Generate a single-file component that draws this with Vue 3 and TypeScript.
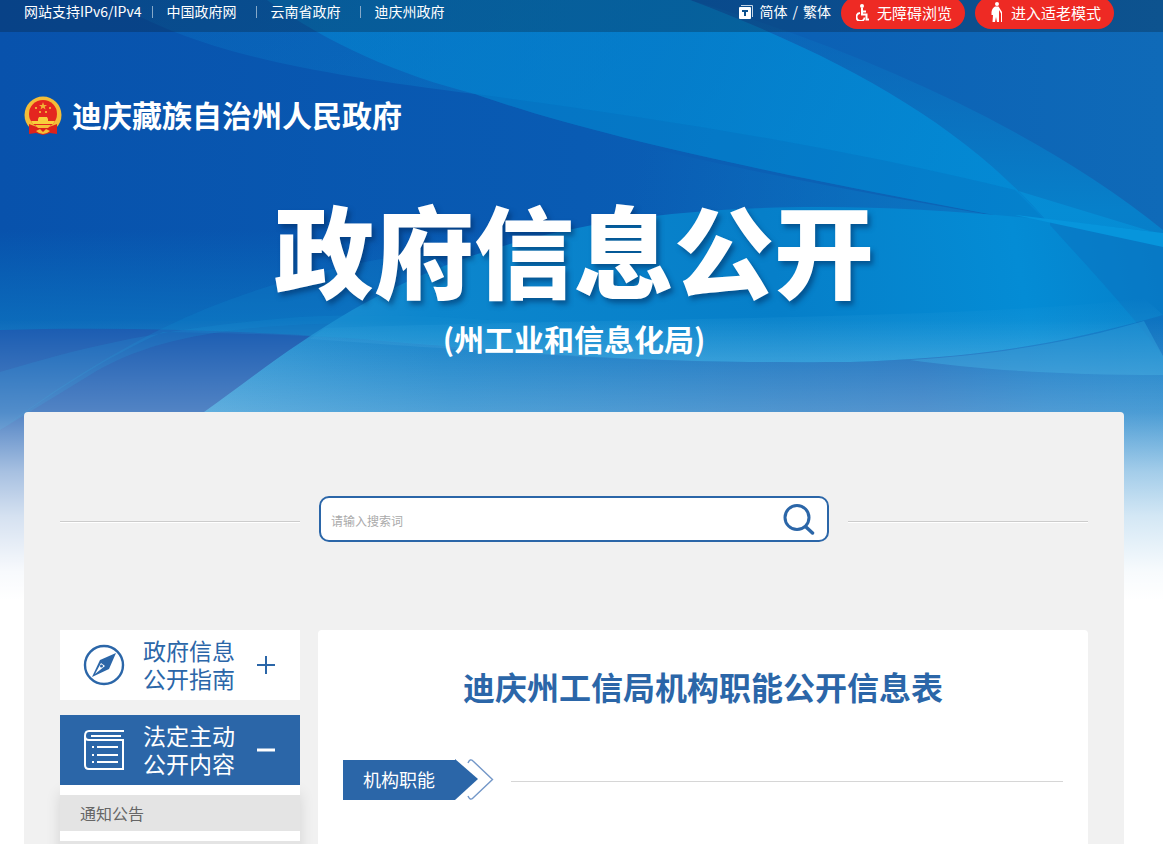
<script setup lang="ts">
import { ref } from 'vue'

const keyword = ref('')
const portals: string[] = ['中国政府网', '云南省政府', '迪庆州政府']
const notices: string[] = ['通知公告', '']
</script>

<template>
  <div class="page">
    <svg class="backdrop" viewBox="0 0 1163 620" preserveAspectRatio="none" aria-hidden="true">
      <defs>
        <linearGradient id="base" x1="0" y1="0" x2="1" y2="0">
          <stop offset="0" stop-color="#0852ac" />
          <stop offset="0.5" stop-color="#095bb3" />
          <stop offset="1" stop-color="#0f6ab8" />
        </linearGradient>
        <linearGradient id="upper" x1="0" y1="0" x2="1" y2="0.3">
          <stop offset="0" stop-color="#0a84cf" stop-opacity="0.2" />
          <stop offset="0.5" stop-color="#0a8ad4" stop-opacity="0.35" />
          <stop offset="1" stop-color="#049ae0" stop-opacity="0.5" />
        </linearGradient>
        <linearGradient id="ribbon" gradientUnits="userSpaceOnUse" x1="267" y1="0" x2="1050" y2="225">
          <stop offset="0" stop-color="#0487d2" stop-opacity="0.5" />
          <stop offset="0.5" stop-color="#0382ce" stop-opacity="0.75" />
          <stop offset="1" stop-color="#038cd6" stop-opacity="0.9" />
        </linearGradient>
        <linearGradient id="right" x1="0" y1="0" x2="0" y2="1">
          <stop offset="0" stop-color="#0b70be" stop-opacity="0.2" />
          <stop offset="0.5" stop-color="#0780ca" />
          <stop offset="1" stop-color="#0975c4" />
        </linearGradient>
        <linearGradient id="gap" gradientUnits="userSpaceOnUse" x1="640" y1="150" x2="1050" y2="222">
          <stop offset="0" stop-color="#0a72c0" stop-opacity="0" />
          <stop offset="1" stop-color="#0a7cc8" />
        </linearGradient>
        <linearGradient id="wave" gradientUnits="userSpaceOnUse" x1="204" y1="412" x2="1163" y2="240">
          <stop offset="0" stop-color="#2a93d3" />
          <stop offset="0.25" stop-color="#0c86cd" />
          <stop offset="0.6" stop-color="#067fc9" />
          <stop offset="0.85" stop-color="#048cd5" />
          <stop offset="1" stop-color="#0580ca" />
        </linearGradient>
        <linearGradient id="lift" x1="0" y1="0" x2="0" y2="1">
          <stop offset="0" stop-color="#0a78c4" stop-opacity="0" />
          <stop offset="1" stop-color="#0f78c2" stop-opacity="0.85" />
        </linearGradient>
        <linearGradient id="shade">
          <stop offset="0" stop-color="#1d66b7" stop-opacity="0" />
          <stop offset="0.4" stop-color="#1d66b7" stop-opacity="0.35" />
          <stop offset="0.75" stop-color="#1d66b7" stop-opacity="0.75" />
          <stop offset="1" stop-color="#1d66b7" stop-opacity="0.3" />
        </linearGradient>
        <linearGradient id="glow" x1="0" y1="0" x2="0" y2="1">
          <stop offset="0" stop-color="#2a9ddb" stop-opacity="0" />
          <stop offset="1" stop-color="#2a9ddb" stop-opacity="0.6" />
        </linearGradient>
        <linearGradient id="fade" x1="0" y1="0" x2="0" y2="1">
          <stop offset="0" stop-color="#fff" stop-opacity="0" />
          <stop offset="0.33" stop-color="#fff" stop-opacity="0.26" />
          <stop offset="0.4" stop-color="#fff" stop-opacity="0.38" />
          <stop offset="0.54" stop-color="#fff" stop-opacity="0.62" />
          <stop offset="0.7" stop-color="#fff" stop-opacity="0.82" />
          <stop offset="0.9" stop-color="#fff" stop-opacity="0.97" />
          <stop offset="1" stop-color="#fff" />
        </linearGradient>
      </defs>
      <rect width="1163" height="620" fill="url(#base)" />
      <rect y="230" width="1163" height="120" fill="url(#lift)" />
      <path d="M690 0C860 50 1040 130 1163 230V420L1050 225C970 130 850 60 690 0Z" fill="url(#right)" />
      <path d="M593 134C742 172 900 200 1050 225V240H593Z" fill="url(#gap)" />
      <path d="M111 0C190 50 300 72 475 94C650 117 830 145 1015 190L1163 235V247L1050 225C970 130 850 60 690 0Z" fill="url(#upper)" />
      <path d="M267 0C330 45 400 75 475 94C600 138 800 180 1050 225C970 130 850 60 690 0Z" fill="url(#ribbon)" />
      <path d="M475 94C600 138 800 180 1050 225L1015 190C830 145 650 117 475 94Z" fill="#0576c4" opacity=".35" />
      <path d="M0 330C180 325 350 336 519 352V620H0Z" fill="#1659b0" />
      <path d="M0 430C60 385 110 355 163 328C240 290 340 262 430 252L519 330C300 315 170 325 90 375Z" fill="#0f86cc" opacity=".28" />
      <path d="M204 412C330 322 450 207 820 207C940 207 1060 220 1163 233V620H0Z" fill="url(#wave)" />
      <path d="M1050 225C1095 275 1130 312 1163 356V233L1050 222Z" fill="#0a72c0" opacity=".5" />
      <path d="M1015 215L1163 233V247Z" fill="#0795dc" />
      <path d="M325 328C600 318 980 320 1144 298L1163 315C1040 350 960 358 850 362C690 363 600 360 310 339Z" fill="url(#glow)" />
      <path d="M310 336L350 338C600 360 690 363 850 362C960 358 1040 350 1163 315V620H204V412Z" fill="url(#shade)" />
      <path d="M0 372C90 345 163 328 300 317C430 310 560 325 668 340L519 352C400 340 300 334 163 332C100 360 50 395 0 430Z" fill="#168dd1" opacity=".24" />
      <path d="M910 360C1000 355 1080 340 1144 321L1163 356V375C1060 375 980 370 910 360Z" fill="#229ad8" opacity=".55" />
      <rect y="320" width="1163" height="280" fill="url(#fade)" />
      <rect y="600" width="1163" height="20" fill="#fff" />
    </svg>

    <div class="topbar">
      <div class="topbar-inner">
        <nav class="portals">
          <span>网站支持IPv6/IPv4</span>
          <a v-for="name in portals" :key="name" href="#">{{ name }}</a>
        </nav>
        <div class="tools">
          <span class="script">
            <svg width="14" height="14" viewBox="0 0 14 14" aria-hidden="true">
              <path d="M2 .5H13.5V12" fill="none" stroke="#c6d6e6" />
              <rect y="2" width="12" height="12" rx="1" fill="#fff" />
              <path d="M3 5H9V7H7V11H5V7H3Z" fill="#0b508d" />
            </svg>
            <a href="#">简体</a> / <a href="#">繁体</a>
          </span>
          <button class="pill" type="button">
            <svg width="14" height="18" viewBox="0 0 14 18" fill="none" stroke="#fff" aria-hidden="true">
              <circle cx="6" cy="3" r="2" fill="#fff" stroke="none" />
              <path d="M6 5V11.500H10.500V16.500H13M6 8.500H10" stroke-width="2" />
              <path d="M4 10A4 4 0 1 0 8.500 14.500" stroke-width="1.800" />
            </svg>
            无障碍浏览
          </button>
          <button class="pill" type="button">
            <svg width="14" height="20" viewBox="0 0 14 20" fill="#fff" aria-hidden="true">
              <circle cx="7" cy="2" r="2" />
              <path d="M5 4.500Q2 6 1.500 10V13H3L2.500 20H5L6 15L7 20H9V8L11 11.500L12 10L8.500 4.500Z" />
              <path d="M11.500 10V20" fill="none" stroke="#fff" />
            </svg>
            进入适老模式
          </button>
        </div>
      </div>
    </div>

    <header class="banner">
      <a class="brand" href="#">
        <svg width="38" height="40" viewBox="0 0 38 40" aria-hidden="true">
          <ellipse cx="19" cy="19" rx="18.500" ry="18.500" fill="#f4bd38" />
          <circle cx="19" cy="18" r="14" fill="#e4261f" />
          <path d="M19 6L20 9H23L20.700 10.800L21.500 13.500L19 11.800L16.500 13.500L17.300 10.800L15 9H18Z" fill="#f3b236" />
          <path d="M11 11H13V13H11ZM25 11H27V13H25ZM15 15H17V17H15ZM21 15H23V17H21Z" fill="#f0a634" />
          <path d="M14 23L15 21H23L24 23V25H31L29 28H9L7 25H14Z" fill="#f8cf3c" />
          <path d="M5 28L13 31H25L33 28V38L26 37L19 39L12 37L5 38Z" fill="#dc221c" />
          <path d="M11 29H27L24 32H14ZM12 35L16 33L19 36L22 33L26 35L23 37L19 38L15 37Z" fill="#f5c037" />
        </svg>
        <span>迪庆藏族自治州人民政府</span>
      </a>
      <h1>政府信息公开</h1>
      <p class="bureau">(州工业和信息化局)</p>
    </header>

    <main class="sheet">
      <form class="search-row" @submit.prevent>
        <i class="rule"></i>
        <div class="search">
          <input v-model="keyword" type="text" aria-label="搜索词" placeholder="请输入搜索词" />
          <button type="submit" aria-label="搜索">
            <svg width="32" height="32" viewBox="0 0 32 32" fill="none" stroke="#2b66a8" aria-hidden="true">
              <circle cx="14" cy="14.500" r="12" stroke-width="3" />
              <path d="M23 24L29.500 30" stroke-width="3.500" stroke-linecap="round" />
            </svg>
          </button>
        </div>
        <i class="rule"></i>
      </form>

      <div class="columns">
        <aside>
          <button class="group" type="button" aria-expanded="false">
            <svg width="42" height="42" viewBox="0 0 42 42" aria-hidden="true">
              <circle cx="21" cy="21" r="19" fill="none" stroke="#2b66a8" stroke-width="2.400" />
              <path d="M33 9L26 25L9 33L17 16Z" fill="#2b66a8" />
              <path d="M18 19L22 22L12 30Z" fill="#fff" />
              <circle cx="18.500" cy="22" r="1.500" fill="#2b66a8" />
            </svg>
            <span>政府信息<br />公开指南</span>
            <svg class="sign" width="18" height="18" viewBox="0 0 18 18" stroke="#2b66a8" stroke-width="2" aria-hidden="true">
              <path d="M0 9H18M9 0V18" />
            </svg>
          </button>
          <button class="group open" type="button" aria-expanded="true">
            <svg width="42" height="42" viewBox="0 0 42 42" fill="none" stroke="#fff" stroke-width="2" aria-hidden="true">
              <path d="M41 2H6Q2 2 2 7V36Q2 40 6 40H40V11H6Q2 11 2 7" />
              <path d="M8 7H38" stroke-width="2" />
              <path d="M14 18H35M14 26H35M14 33H35M9 18H11M9 26H11M9 33H11" />
            </svg>
            <span>法定主动<br />公开内容</span>
            <svg class="sign" width="18" height="18" viewBox="0 0 18 18" stroke="#fff" stroke-width="3" aria-hidden="true">
              <path d="M0 9H18" />
            </svg>
          </button>
          <ul class="notices">
            <li v-for="item in notices" :key="item"><a v-if="item" href="#">{{ item }}</a></li>
          </ul>
        </aside>

        <article>
          <h2>迪庆州工信局机构职能公开信息表</h2>
          <div class="section">
            <h3>机构职能</h3>
            <svg width="40" height="42" viewBox="0 0 40 42" aria-hidden="true">
              <path d="M0 0L23 20L0 41Z" fill="#2b66a8" />
              <path d="M13 4Q15 -1 18 2L37.500 20.500L18 39Q15 42 13 37" fill="none" stroke="#7397c8" stroke-width="1.400" />
            </svg>
            <i class="rule"></i>
          </div>
        </article>
      </div>
    </main>
  </div>
</template>

<style>
body {
  overflow: hidden;
}
</style>

<style scoped>
.page {
  position: relative;
  height: 100vh;
  overflow: hidden;
  background: #fff;
  font-family: "Noto Sans CJK SC", sans-serif;
}
.page * {
  box-sizing: border-box;
}
a {
  color: inherit;
  text-decoration: none;
}
button {
  border: 0;
  font-family: inherit;
  cursor: pointer;
}
svg {
  display: block;
  flex: none;
}
.backdrop {
  position: absolute;
  top: 0;
  left: 0;
  width: 100%;
  height: 620px;
}
.topbar {
  position: relative;
  height: 32px;
  padding: 0 24px;
  background: rgba(10, 30, 50, 0.3);
  color: #fff;
  font-size: 14px;
  line-height: 22px;
}
.topbar-inner {
  display: flex;
  justify-content: space-between;
  max-width: 1100px;
}
.portals {
  display: flex;
}
.portals a {
  position: relative;
  margin-left: 25px;
}
.portals a + a {
  margin-left: 34px;
}
.portals a::before {
  content: "";
  position: absolute;
  top: 6px;
  left: -15px;
  width: 1px;
  height: 12px;
  background: #86a9c9;
}
.tools {
  display: flex;
  gap: 10px;
  padding-right: 10px;
}
.script {
  display: flex;
  align-items: center;
  gap: 5px;
  height: 22px;
}
.script svg {
  margin: 2px 1px 0 0;
}
.pill {
  display: flex;
  align-items: center;
  gap: 7px;
  height: 32px;
  margin-top: -3px;
  padding: 0 13px 2px 15px;
  border-radius: 16px;
  background: #ee2a24;
  color: #fff;
  font-size: 15px;
}
.banner {
  position: relative;
  max-width: 1100px;
  height: 380px;
  margin: 0 24px;
  color: #fff;
  text-align: center;
}
.brand {
  display: flex;
  align-items: flex-end;
  gap: 10px;
  padding-top: 60px;
  font-size: 30px;
  font-weight: 700;
  line-height: 44px;
}
h1 {
  margin: 42px 0 0;
  font-size: 100px;
  font-weight: 900;
  line-height: 140px;
  text-shadow: 3px 4px 5px rgba(0, 40, 90, 0.5);
}
.bureau {
  margin: 0;
  font-size: 30px;
  font-weight: 700;
  line-height: 40px;
}
.sheet {
  position: relative;
  max-width: 1100px;
  min-height: 460px;
  margin: 0 24px;
  padding: 84px 36px 0;
  border-radius: 4px 4px 0 0;
  background: #f1f1f1;
}
.search-row {
  display: flex;
  align-items: center;
  gap: 19px;
}
.rule {
  flex: 1;
  height: 1px;
  margin-top: 5px;
  background: #ccc;
  box-shadow: 0 1px #fff;
}
.search {
  display: flex;
  align-items: center;
  width: 510px;
  height: 46px;
  padding: 0 12px 0 10px;
  border: 2px solid #2b66a8;
  border-radius: 10px;
  background: #fff;
}
.search input {
  flex: 1;
  min-width: 0;
  height: 30px;
  padding: 2px 0 0;
  border: 0;
  outline: 0;
  background: none;
  font: 12px "Noto Sans CJK SC", sans-serif;
}
.search input::placeholder {
  color: #aaa;
}
.search button {
  padding: 0;
  background: none;
}
.columns {
  display: flex;
  gap: 18px;
  margin-top: 88px;
}
aside {
  width: 240px;
}
.group {
  display: flex;
  align-items: center;
  width: 100%;
  height: 70px;
  margin-bottom: 15px;
  padding: 0 25px 0 23px;
  background: #fff;
  color: #2b66a8;
  font-family: "Liberation Sans", "Noto Sans CJK SC", sans-serif;
  font-size: 23px;
  line-height: 28px;
  text-align: left;
}
.group span {
  margin-left: 18px;
  padding-top: 2px;
}
.sign {
  margin-left: auto;
}
.group.open {
  margin-bottom: 0;
  background: #2b66a8;
  color: #fff;
}
.notices {
  margin: 0;
  padding: 10px 0 0;
  background: #fff;
  box-shadow: 0 8px 14px rgba(0, 0, 0, 0.12);
  list-style: none;
}
.notices li {
  height: 36px;
  margin-bottom: 10px;
  padding-left: 20px;
  background: #e4e4e4;
  color: #666;
  font-size: 16px;
  line-height: 36px;
}
article {
  flex: 1;
  min-height: 260px;
  padding: 32px 25px 0;
  border-radius: 4px 4px 0 0;
  background: #fff;
}
h2 {
  margin: 0;
  color: #2b66a8;
  font-size: 32px;
  font-weight: 700;
  line-height: 48px;
  text-align: center;
}
.section {
  display: flex;
  align-items: center;
  margin-top: 49px;
}
h3 {
  width: 112px;
  height: 40px;
  margin: 0;
  background: #2b66a8;
  color: #fff;
  font-size: 18px;
  font-weight: 400;
  line-height: 38px;
  text-align: center;
}
.section .rule {
  margin: 2px 0 0 16px;
  background: #d6d6d6;
}
</style>
